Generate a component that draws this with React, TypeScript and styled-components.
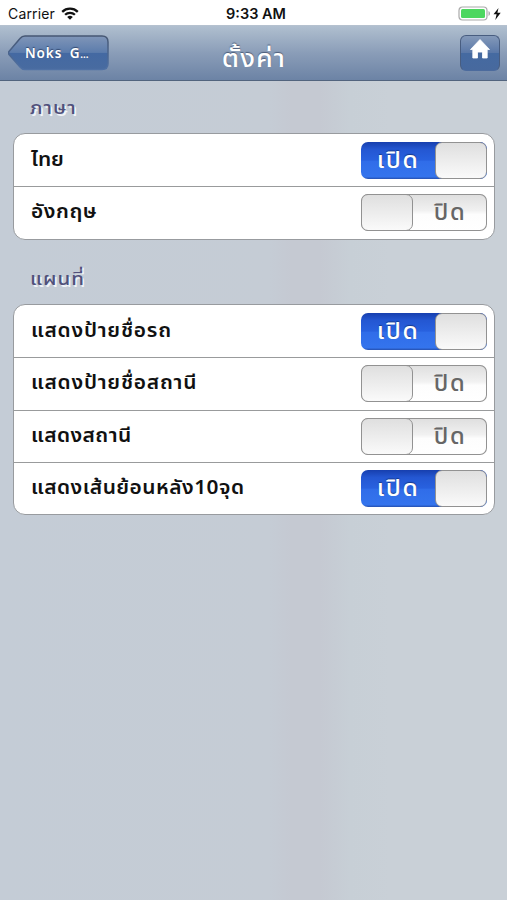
import React, { useState } from "react";
import styled, { createGlobalStyle } from "styled-components";

const GlobalStyle = createGlobalStyle`
  * { box-sizing: border-box; }
  body { margin: 0; background: #c5ccd5; }
  button { padding: 0; border: 0; background: none; font: inherit; color: inherit; }
`;

const Screen = styled.main`
  display: flex;
  flex-direction: column;
  height: 900px;
  font-family: "Noto Sans Thai", "Noto Sans", sans-serif;
  color: #111;
  background: linear-gradient(90deg, #c4ccd6 0, #c5ccd5 270px, #c5c9d2 292px, #c5c9d2 320px, #c7cfd6 350px, #c9d0d7 390px, #c9d0d7 100%);
`;

const StatusBar = styled.header`
  display: grid;
  grid-template-columns: 1fr auto 1fr;
  align-items: center;
  height: 25px;
  padding: 2px 5px 0 8px;
  background: #fff;
  font: 14px/20px Inter, sans-serif;
`;

const Carrier = styled.div`
  display: flex;
  align-items: center;
  gap: 6px;
  letter-spacing: 0.15px;
`;

const Clock = styled.div`
  font-weight: 600;
  font-size: 14.5px;
  padding-left: 2px;
`;

const Power = styled.div`
  display: flex;
  justify-content: flex-end;
`;

const NavBar = styled.nav`
  display: grid;
  grid-template-columns: 101px 1fr 101px;
  align-items: start;
  height: 56px;
  padding: 9px 7px 0 8px;
  background: linear-gradient(#b0bfcf, #8a9db8 50%, #6c83a5);
  border-top: 1px solid #b5c1cf;
  border-bottom: 1px solid #52647e;
`;

const BackButton = styled.button`
  display: grid;
  width: 101px;
  height: 36px;
  > * { grid-area: 1 / 1; }
`;

const BackLabel = styled.span`
  align-self: center;
  padding: 1px 0 0 17px;
  text-align: left;
  color: #fff;
  font: 600 13.5px/20px "Noto Sans", sans-serif;
  letter-spacing: 0.9px;
  word-spacing: 3px;
  text-shadow: 0 -1px 1px #33486f;
  i { font-style: normal; letter-spacing: 0; font-size: 10px; }
`;

const Title = styled.h1`
  margin: 7px 0 0;
  text-align: center;
  color: #fff;
  font-size: 24px;
  line-height: 36px;
  font-weight: 500;
  letter-spacing: 1px;
  transform: scaleX(1.12);
  text-shadow: 0 -1px 1px #4a5c79;
`;

const HomeButton = styled.button`
  justify-self: end;
  display: flex;
  justify-content: center;
  width: 40px;
  height: 36px;
  padding-top: 2px;
  border: 1px solid #485d80;
  border-bottom-color: #4c6b9d;
  border-radius: 6px;
  background: linear-gradient(#8499b9, #5a78a8 49%, #456aa1 51%, #47699e);
`;

const Content = styled.div`
  padding: 0 12px 0 13px;
`;

const SectionTitle = styled.h2<{ $height: number }>`
  display: flex;
  align-items: flex-end;
  height: ${(p) => p.$height}px;
  margin: 0;
  padding: 0 0 10px 17px;
  color: #50507b;
  font-size: 18px;
  line-height: 28px;
  font-weight: 500;
  letter-spacing: 0.8px;
  text-shadow: 1.5px 1.5px 0 #f1f4f8;
  span { transform: scaleX(1.14); transform-origin: left; }
`;

const Card = styled.ul`
  margin: 0;
  padding: 0;
  list-style: none;
  overflow: hidden;
  border: 1px solid #989b9f;
  border-radius: 12px;
  background: #fff;
`;

const Row = styled.li`
  display: flex;
  align-items: center;
  justify-content: space-between;
  height: 52.25px;
  padding: 0 7px 0 17px;
  & + & { border-top: 1px solid #999b9c; }
`;

const RowLabel = styled.span<{ $tracking: number }>`
  padding-top: 1px;
  font-size: 19px;
  line-height: 30px;
  font-weight: 600;
  white-space: nowrap;
  letter-spacing: ${(p) => p.$tracking}px;
  transform: scaleX(1.1);
  transform-origin: left;
`;

const Track = styled.button<{ $on: boolean }>`
  display: flex;
  flex-direction: ${(p) => (p.$on ? "row" : "row-reverse")};
  width: 126px;
  height: 37px;
  overflow: hidden;
  border-radius: 7px;
  box-shadow: ${(p) => (p.$on ? "none" : "inset 0 0 0 1px #929292")};
  background: ${(p) =>
    p.$on
      ? "linear-gradient(#173fae, #2457d2 20%, #2861df 49%, #306de9 52%, #3474ed 94%, #254fae)"
      : "linear-gradient(#dedede, #f1f1f1 45%, #fdfdfd 55%, #fff)"};
`;

const TrackLabel = styled.span<{ $on: boolean }>`
  flex: 1;
  text-align: center;
  color: ${(p) => (p.$on ? "#fff" : "#666")};
  font-size: 23px;
  line-height: 38px;
  font-weight: 500;
  letter-spacing: 1.5px;
  transform: scaleX(${(p) => (p.$on ? 1.07 : 1.03)});
  text-shadow: ${(p) => (p.$on ? "0 -1px 1px #173a8c" : "none")};
`;

const Knob = styled.span`
  width: 52px;
  height: 37px;
  border: 1px solid #929292;
  border-radius: 7px;
  background: linear-gradient(#dfdfdf, #fafafa);
`;

const WifiIcon = () => (
  <svg width="18" height="13" viewBox="0 0 18 13" fill="none" stroke="#111" strokeWidth="2.3">
    <path d="M1.2 4.8a11.3 11.3 0 0 1 15.6 0M4.1 7.8a7 7 0 0 1 9.8 0" />
    <path d="M6.2 10a4 4 0 0 1 5.6 0L9 12.8Z" fill="#111" stroke="none" />
  </svg>
);

const BatteryIcon = () => (
  <svg width="44" height="16" viewBox="0 0 44 16">
    <rect x="1" y="1" width="28" height="13" rx="3.5" fill="#fff" stroke="#aaa" strokeWidth="1.2" />
    <rect x="3" y="3" width="24" height="9" rx="1.5" fill="#4cd75f" />
    <path d="M30.5 5v5c2-.7 2-4.3 0-5Z" fill="#aaa" />
    <path d="m40.5 2-5 6.2h3.1L37.3 14l5.4-7.2h-3.3Z" fill="#111" />
  </svg>
);

const BackShape = () => (
  <svg width="101" height="36" viewBox="0 0 101 36">
    <defs>
      <linearGradient id="back-fill" x2="0" y2="1">
        <stop stopColor="#8096b8" />
        <stop offset=".49" stopColor="#5c7cac" />
        <stop offset=".52" stopColor="#4469a2" />
        <stop offset="1" stopColor="#486ba0" />
      </linearGradient>
      <linearGradient id="back-edge" x2="0" y2="1">
        <stop stopColor="#465773" />
        <stop offset="1" stopColor="#4f71a5" />
      </linearGradient>
    </defs>
    <path
      d="M17 1h77q6 0 6 6v21.500q0 6-6 6H17q-3 0-5-2.500L1 19.500q-1-1.500 0-3L12 3.500Q14 1 17 1Z"
      fill="url(#back-fill)"
      stroke="url(#back-edge)"
      strokeWidth="1.5"
    />
  </svg>
);

const HomeIcon = () => (
  <svg width="22" height="22" viewBox="0 0 22 22">
    <path d="m11 1.500 9.500 10h-2.300v8.500h-4.700v-6h-5v6H3.800v-8.500H1.500Z" fill="#fff" stroke="#fff" strokeWidth=".8" strokeLinejoin="round" />
  </svg>
);

interface Setting {
  label: string;
  on: boolean;
  tracking: number;
}

const languages: Setting[] = [
  { label: "ไทย", on: true, tracking: 0 },
  { label: "อังกฤษ", on: false, tracking: 0.5 },
];

const mapOptions: Setting[] = [
  { label: "แสดงป้ายชื่อรถ", on: true, tracking: 0.7 },
  { label: "แสดงป้ายชื่อสถานี", on: false, tracking: 0.7 },
  { label: "แสดงสถานี", on: false, tracking: 0.4 },
  { label: "แสดงเส้นย้อนหลัง10จุด", on: true, tracking: 0.43 },
];

function SettingRow({ label, on: initial, tracking }: Setting) {
  const [on, setOn] = useState(initial);
  return (
    <Row>
      <RowLabel $tracking={tracking}>{label}</RowLabel>
      <Track $on={on} role="switch" aria-checked={on} aria-label={label} onClick={() => setOn(!on)}>
        <TrackLabel $on={on}>{on ? "เปิด" : "ปิด"}</TrackLabel>
        <Knob />
      </Track>
    </Row>
  );
}

export default function App() {
  return (
    <Screen>
      <GlobalStyle />
      <StatusBar>
        <Carrier>Carrier <WifiIcon /></Carrier>
        <Clock>9:33 AM</Clock>
        <Power><BatteryIcon /></Power>
      </StatusBar>
      <NavBar>
        <BackButton>
          <BackShape />
          <BackLabel>Noks G<i>…</i></BackLabel>
        </BackButton>
        <Title>ตั้งค่า</Title>
        <HomeButton aria-label="Home"><HomeIcon /></HomeButton>
      </NavBar>
      <Content>
        <SectionTitle $height={52}><span>ภาษา</span></SectionTitle>
        <Card>{languages.map((s) => <SettingRow key={s.label} {...s} />)}</Card>
        <SectionTitle $height={64.5}><span>แผนที่</span></SectionTitle>
        <Card>{mapOptions.map((s) => <SettingRow key={s.label} {...s} />)}</Card>
      </Content>
    </Screen>
  );
}
